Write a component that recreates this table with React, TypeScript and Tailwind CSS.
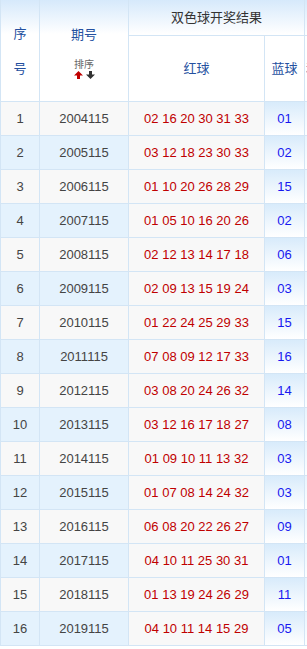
import React from 'react';

const rows: [number, string, string, string][] = [
  [1, '2004115', '02 16 20 30 31 33', '01'],
  [2, '2005115', '03 12 18 23 30 33', '02'],
  [3, '2006115', '01 10 20 26 28 29', '15'],
  [4, '2007115', '01 05 10 16 20 26', '02'],
  [5, '2008115', '02 12 13 14 17 18', '06'],
  [6, '2009115', '02 09 13 15 19 24', '03'],
  [7, '2010115', '01 22 24 25 29 33', '15'],
  [8, '2011115', '07 08 09 12 17 33', '16'],
  [9, '2012115', '03 08 20 24 26 32', '14'],
  [10, '2013115', '03 12 16 17 18 27', '08'],
  [11, '2014115', '01 09 10 11 13 32', '03'],
  [12, '2015115', '01 07 08 14 24 32', '03'],
  [13, '2016115', '06 08 20 22 26 27', '09'],
  [14, '2017115', '04 10 11 25 30 31', '01'],
  [15, '2018115', '01 13 19 24 26 29', '11'],
  [16, '2019115', '04 10 11 14 15 29', '05'],
];

// 表头渐变背景
const headBg = 'bg-[linear-gradient(to_bottom,#d6e9fb_0px,#ffffff_34px)]';
const cell = 'flex items-center justify-center border-r border-b border-[#d3e5f5]';

const Arrow = ({ up, color }: { up: boolean; color: string }) => (
  <svg width="9" height="8" viewBox="0 0 9 8" className={up ? '' : 'rotate-180'}>
    <path d="M4.5 0 L9 4.5 L6 4.5 L6 8 L3 8 L3 4.5 L0 4.5 Z" fill={color} />
  </svg>
);

export default function App() {
  return (
    <div className="w-[307px] h-[649px] overflow-hidden bg-white font-['Liberation_Sans','Noto_Sans_CJK_SC',sans-serif] text-[13px]">
      <div className="grid w-max grid-cols-[39px_89px_136px_40px_40px] border-l border-[#d3e5f5]">
        {/* 表头 */}
        <div className={`${cell} ${headBg} row-span-2 h-[102px] flex-col text-[#2450a0] leading-[35px]`}>
          <span>序</span>
          <span>号</span>
        </div>
        <div className={`${cell} ${headBg} row-span-2 h-[102px] flex-col justify-start pt-[24px]`}>
          <span className="text-[#2450a0] leading-[22px]">期号</span>
          <span className="mt-[13px] text-[10px] leading-[11px] text-[#666]">排序</span>
          <div className="flex gap-[3px] mt-[1px]">
            <Arrow up color="#c00000" />
            <Arrow up={false} color="#333333" />
          </div>
        </div>
        <div className={`${cell} ${headBg} col-span-2 h-[36px] text-[#333]`}>双色球开奖结果</div>
        <div className={`${cell} ${headBg} h-[36px]`}></div>
        <div className={`${cell} h-[66px] text-[#2450a0]`}>红球</div>
        <div className={`${cell} h-[66px] text-[#2450a0]`}>蓝球</div>
        <div className={`${cell} h-[66px] justify-start pl-[1px] text-[#2450a0]`}>和值</div>

        {/* 数据行 */}
        {rows.map(([no, issue, reds, blue]) => {
          const even = no % 2 === 0;
          const side = even ? 'bg-[#e4f2fd]' : 'bg-[#f8f8f8]';
          return (
            <React.Fragment key={no}>
              <div className={`${cell} ${side} h-[34px] text-[#444]`}>{no}</div>
              <div className={`${cell} ${side} h-[34px] text-[#444]`}>{issue}</div>
              <div className={`${cell} bg-[#f8f8f8] h-[34px] text-[#c00000] whitespace-pre`}>{reds}</div>
              <div className={`${cell} h-[34px] text-[#1818f0] bg-[linear-gradient(to_bottom,#d8ebfb,#ffffff)]`}>{blue}</div>
              <div className={`${cell} h-[34px] bg-[linear-gradient(to_bottom,#e8f4fd,#ffffff)]`}></div>
            </React.Fragment>
          );
        })}
      </div>
    </div>
  );
}
